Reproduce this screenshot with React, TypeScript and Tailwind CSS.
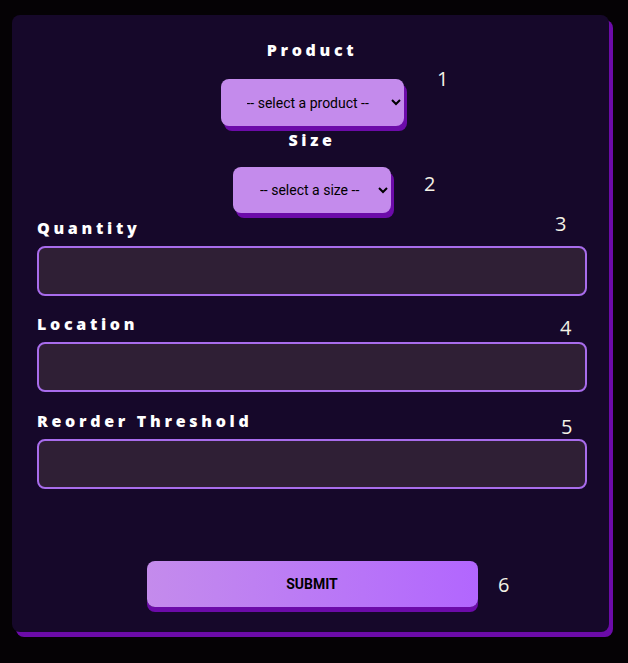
import React from 'react';

const labelCls =
  "block text-[16px] leading-[24px] font-extrabold tracking-[3.7px] text-white font-['Open_Sans',sans-serif]";
const numCls =
  "absolute text-[20px] leading-[28px] font-normal text-[#f3f2e6] font-['Open_Sans',sans-serif]";
const inputCls =
  "block w-full h-[50px] rounded-lg border-2 border-[#a86cec] bg-[#2f1f35] outline-none";

const Field: React.FC<{ label: string; num: string; numPos: string; className?: string }> = ({
  label,
  num,
  numPos,
  className,
}) => (
  <div className={`relative ${className ?? ''}`}>
    <label className={labelCls}>{label}</label>
    <span className={`${numCls} ${numPos}`}>{num}</span>
    <input type="text" className={`${inputCls} mt-[6px]`} />
  </div>
);

const App: React.FC = () => {
  return (
    <div className="min-h-[663px] w-full bg-[#050205] pt-[15px] pl-[12px]">
      <form className="flex h-[617px] w-[597px] flex-col rounded-lg bg-[#16082a] pl-[25px] pr-[22px] pt-[23px] shadow-[4px_5px_0_#6c0ba9]">
        <label className={`${labelCls} text-center`}>Product</label>

        <div className="relative mt-[17px] flex justify-center">
          <select className="h-[47px] w-[183px] rounded-lg bg-[#c48bec] pl-[22px] pr-[2px] text-[14px] text-black shadow-[3px_5px_0_#6c0ba9] font-['Roboto',Arial,sans-serif]">
            <option>-- select a product --</option>
          </select>
          <span className={`${numCls} left-[400px] top-[-14px]`}>1</span>
        </div>

        <label className={`${labelCls} mt-[2px] text-center`}>Size</label>

        <div className="relative mt-[15px] flex justify-center">
          <select className="h-[46px] w-[158px] rounded-lg bg-[#c48bec] pl-[23px] pr-[1px] text-[14px] text-black shadow-[3px_5px_0_#6c0ba9] font-['Roboto',Arial,sans-serif]">
            <option>-- select a size --</option>
          </select>
          <span className={`${numCls} left-[387px] top-[3px]`}>2</span>
        </div>

        <Field label="Quantity" num="3" numPos="left-[518px] top-[-6px]" className="mt-[3px]" />
        <Field label="Location" num="4" numPos="left-[523px] top-[2px]" className="mt-[16px]" />
        <Field label="Reorder Threshold" num="5" numPos="left-[524px] top-[4px]" className="mt-[17px]" />

        <div className="relative mt-[72px] flex justify-center">
          <button
            type="button"
            className="h-[46px] w-[331px] rounded-lg bg-gradient-to-r from-[#c48bec] to-[#b266fe] text-[14px] font-bold text-black shadow-[0_5px_0_#6c0ba9] font-['Roboto',Arial,sans-serif]"
          >
            SUBMIT
          </button>
          <span className={`${numCls} left-[461px] top-[10px]`}>6</span>
        </div>
      </form>
    </div>
  );
};

export default App;
